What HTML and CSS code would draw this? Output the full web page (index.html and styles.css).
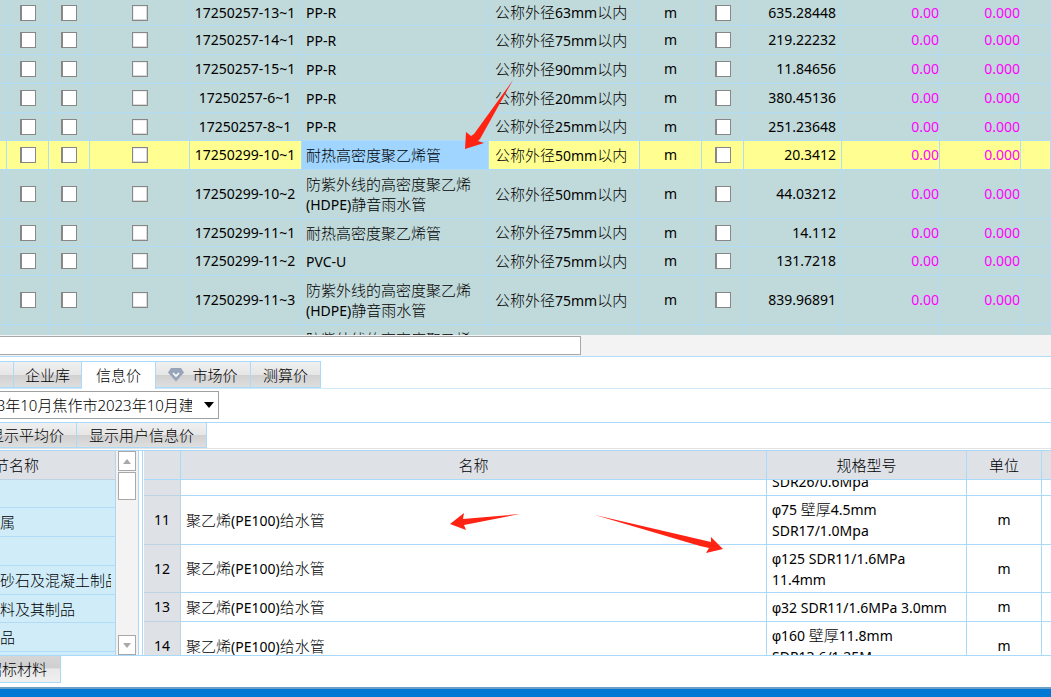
FILE: index.html
```html
<!DOCTYPE html>
<html lang="zh-CN">
<head>
<meta charset="utf-8">
<title>信息价</title>
<link rel="stylesheet" href="styles.css">
</head>
<body>
<main class="app">
  <section class="materials">
    <table class="grid">
      <colgroup><col class="w7"><col class="w42"><col class="w41"><col class="w100"><col class="w112"><col class="w187"><col class="w151"><col class="w62"><col class="w42"><col class="w98"><col class="w98"><col class="w81"><col></colgroup>
      <tbody>
        <tr class="cut"><td></td><td><input type="checkbox" aria-label="选择"></td><td><input type="checkbox" aria-label="锁定"></td><td><input type="checkbox" class="soft" aria-label="输出"></td><td class="code"><div>17250257-13~1</div></td><td class="name"><span class="lat">PP-R</span></td><td class="name size">公称外径<span class="lat">63mm</span>以内</td><td>m</td><td><input type="checkbox" aria-label="暂估"></td><td class="num">635.28448</td><td class="price">0.00</td><td class="price">0.000</td><td></td></tr>
        <tr><td></td><td><input type="checkbox" aria-label="选择"></td><td><input type="checkbox" aria-label="锁定"></td><td><input type="checkbox" class="soft" aria-label="输出"></td><td class="code"><div>17250257-14~1</div></td><td class="name"><span class="lat">PP-R</span></td><td class="name size">公称外径<span class="lat">75mm</span>以内</td><td>m</td><td><input type="checkbox" aria-label="暂估"></td><td class="num">219.22232</td><td class="price">0.00</td><td class="price">0.000</td><td></td></tr>
        <tr><td></td><td><input type="checkbox" aria-label="选择"></td><td><input type="checkbox" aria-label="锁定"></td><td><input type="checkbox" class="soft" aria-label="输出"></td><td class="code"><div>17250257-15~1</div></td><td class="name"><span class="lat">PP-R</span></td><td class="name size">公称外径<span class="lat">90mm</span>以内</td><td>m</td><td><input type="checkbox" aria-label="暂估"></td><td class="num">11.84656</td><td class="price">0.00</td><td class="price">0.000</td><td></td></tr>
        <tr><td></td><td><input type="checkbox" aria-label="选择"></td><td><input type="checkbox" aria-label="锁定"></td><td><input type="checkbox" class="soft" aria-label="输出"></td><td class="code"><div>17250257-6~1</div></td><td class="name"><span class="lat">PP-R</span></td><td class="name size">公称外径<span class="lat">20mm</span>以内</td><td>m</td><td><input type="checkbox" aria-label="暂估"></td><td class="num">380.45136</td><td class="price">0.00</td><td class="price">0.000</td><td></td></tr>
        <tr class="short"><td></td><td><input type="checkbox" aria-label="选择"></td><td><input type="checkbox" aria-label="锁定"></td><td><input type="checkbox" class="soft" aria-label="输出"></td><td class="code"><div>17250257-8~1</div></td><td class="name"><span class="lat">PP-R</span></td><td class="name size">公称外径<span class="lat">25mm</span>以内</td><td>m</td><td><input type="checkbox" aria-label="暂估"></td><td class="num">251.23648</td><td class="price">0.00</td><td class="price">0.000</td><td></td></tr>
        <tr class="current"><td></td><td><input type="checkbox" aria-label="选择"></td><td><input type="checkbox" aria-label="锁定"></td><td><input type="checkbox" class="soft" aria-label="输出"></td><td class="code"><div>17250299-10~1</div></td><td class="name picked">耐热高密度聚乙烯管</td><td class="name size">公称外径<span class="lat">50mm</span>以内</td><td>m</td><td><input type="checkbox" aria-label="暂估"></td><td class="num">20.3412</td><td class="price">0.00</td><td class="price">0.000</td><td></td></tr>
        <tr class="tall"><td></td><td><input type="checkbox" aria-label="选择"></td><td><input type="checkbox" aria-label="锁定"></td><td><input type="checkbox" class="soft" aria-label="输出"></td><td class="code"><div>17250299-10~2</div></td><td class="name">防紫外线的高密度聚乙烯<br><span class="lat">(HDPE)</span>静音雨水管</td><td class="name size">公称外径<span class="lat">50mm</span>以内</td><td>m</td><td><input type="checkbox" aria-label="暂估"></td><td class="num">44.03212</td><td class="price">0.00</td><td class="price">0.000</td><td></td></tr>
        <tr class="short"><td></td><td><input type="checkbox" aria-label="选择"></td><td><input type="checkbox" aria-label="锁定"></td><td><input type="checkbox" class="soft" aria-label="输出"></td><td class="code"><div>17250299-11~1</div></td><td class="name">耐热高密度聚乙烯管</td><td class="name size">公称外径<span class="lat">75mm</span>以内</td><td>m</td><td><input type="checkbox" aria-label="暂估"></td><td class="num">14.112</td><td class="price">0.00</td><td class="price">0.000</td><td></td></tr>
        <tr><td></td><td><input type="checkbox" aria-label="选择"></td><td><input type="checkbox" aria-label="锁定"></td><td><input type="checkbox" class="soft" aria-label="输出"></td><td class="code"><div>17250299-11~2</div></td><td class="name"><span class="lat">PVC-U</span></td><td class="name size">公称外径<span class="lat">75mm</span>以内</td><td>m</td><td><input type="checkbox" aria-label="暂估"></td><td class="num">131.7218</td><td class="price">0.00</td><td class="price">0.000</td><td></td></tr>
        <tr class="tall"><td></td><td><input type="checkbox" aria-label="选择"></td><td><input type="checkbox" aria-label="锁定"></td><td><input type="checkbox" class="soft" aria-label="输出"></td><td class="code"><div>17250299-11~3</div></td><td class="name">防紫外线的高密度聚乙烯<br><span class="lat">(HDPE)</span>静音雨水管</td><td class="name size">公称外径<span class="lat">75mm</span>以内</td><td>m</td><td><input type="checkbox" aria-label="暂估"></td><td class="num">839.96891</td><td class="price">0.00</td><td class="price">0.000</td><td></td></tr>
        <tr class="next"><td></td><td></td><td></td><td></td><td></td><td class="name">防紫外线的高密度聚乙烯</td><td></td><td></td><td></td><td></td><td></td><td></td><td></td></tr>
      </tbody>
    </table>
  </section>
  <div class="hscroll"><div class="hthumb"></div></div>

  <nav class="tabs">
    <button class="tab stub" aria-label="上一个"></button>
    <button class="tab library">企业库</button>
    <button class="tab active">信息价</button>
    <button class="tab market"><svg class="gem" viewBox="0 0 16 14" aria-hidden="true"><path d="M3 0H13L16 4.500L8 13.500L0 4.500Z" fill="#98a5b8"/><path d="M5 5L8 8L11 5" fill="none" stroke="#fff" stroke-width="1.600"/></svg>市场价</button>
    <button class="tab estimate">测算价</button>
  </nav>
  <div class="period">
    <div class="combo">
      <select aria-label="信息价期数"><option>2023年10月焦作市2023年10月建筑材料</option></select>
      <svg class="caret" viewBox="0 0 10 6" aria-hidden="true"><path d="M0 0H10L5 6Z" fill="#000"/></svg>
    </div>
  </div>
  <div class="tools">
    <button class="tool average">显示平均价</button>
    <button class="tool user">显示用户信息价</button>
  </div>

  <section class="browser">
    <div class="chapters">
      <table class="tree">
        <thead><tr><th><div class="heading">章节名称</div></th></tr></thead>
        <tbody>
          <tr class="short"><td></td></tr>
          <tr><td>属</td></tr>
          <tr><td></td></tr>
          <tr><td><div class="clip">砂石及混凝土制品</div></td></tr>
          <tr class="short"><td>料及其制品</td></tr>
          <tr><td>品</td></tr>
          <tr><td></td></tr>
        </tbody>
      </table>
      <div class="vscroll">
        <button class="arrow" aria-label="向上滚动"><svg viewBox="0 0 8 5" aria-hidden="true"><path d="M0 5H8L4 0Z" fill="#a8a8a8"/></svg></button>
        <div class="vthumb"></div>
        <button class="arrow last" aria-label="向下滚动"><svg viewBox="0 0 8 5" aria-hidden="true"><path d="M0 0H8L4 5Z" fill="#a8a8a8"/></svg></button>
      </div>
    </div>
    <div class="prices">
      <table class="list">
        <colgroup><col class="w37"><col><col class="w200"><col class="w75"><col class="w9"></colgroup>
        <thead><tr><th></th><th>名称</th><th>规格型号</th><th>单位</th><th></th></tr></thead>
        <tbody>
          <tr class="sliver"><td class="idx"></td><td></td><td class="spec"><div class="remainder"><span class="lat">SDR26/0.6Mpa</span></div></td><td></td><td></td></tr>
          <tr class="tall"><td class="idx">11</td><td class="name">聚乙烯<span class="lat">(PE100)</span>给水管</td><td class="spec"><span class="lat"><span class="phi">φ</span>75 </span>壁厚<span class="lat">4.5mm<br>SDR17/1.0Mpa</span></td><td class="unit">m</td><td></td></tr>
          <tr class="two"><td class="idx">12</td><td class="name">聚乙烯<span class="lat">(PE100)</span>给水管</td><td class="spec"><span class="lat"><span class="phi">φ</span>125 SDR11/1.6MPa<br>11.4mm</span></td><td class="unit">m</td><td></td></tr>
          <tr><td class="idx">13</td><td class="name">聚乙烯<span class="lat">(PE100)</span>给水管</td><td class="spec"><span class="lat"><span class="phi">φ</span>32 SDR11/1.6MPa 3.0mm</span></td><td class="unit">m</td><td></td></tr>
          <tr class="tall"><td class="idx">14</td><td class="name">聚乙烯<span class="lat">(PE100)</span>给水管</td><td class="spec"><span class="lat"><span class="phi">φ</span>160 </span>壁厚<span class="lat">11.8mm<br>SDR13.6/1.25M</span></td><td class="unit">m</td><td></td></tr>
        </tbody>
      </table>
    </div>
  </section>
  <footer class="bottom"><button class="tool bid">招标材料</button></footer>
  <div class="taskbar"></div>

  <svg class="marks" width="1051" height="697" viewBox="0 0 1051 697" aria-hidden="true">
    <g fill="#ff2314">
      <path d="M513 80L480 139L478 141L484 143L465 149L466 132L471 136L474 134Z"/>
      <path d="M520 514L463 519L464 513L450 524L466 530L464 525Z"/>
      <path d="M595 515L711 542L711 537L723 549L706 553L709 548L700 546Z"/>
    </g>
  </svg>
</main>
</body>
</html>
```

FILE: styles.css
```css
* { box-sizing: border-box; }

body {
  margin: 0;
  background: #fff;
  color: #000;
  font: 300 15px/20px "Noto Sans", "Noto Sans CJK SC", sans-serif;
  overflow: hidden;
}

button, select { font: inherit; color: inherit; }

.app {
  position: relative;
  display: flex;
  flex-direction: column;
  height: 100vh;
}

.lat { font-size: 14px; font-weight: 400; }
.phi { font-family: "Liberation Sans", sans-serif; }

table {
  width: 100%;
  border-collapse: separate;
  border-spacing: 0;
  table-layout: fixed;
}

td, th { padding: 0; font-weight: inherit; white-space: nowrap; }

.w7 { width: 7px; }
.w9 { width: 9px; }
.w37 { width: 37px; }
.w41 { width: 41px; }
.w42 { width: 42px; }
.w62 { width: 62px; }
.w75 { width: 75px; }
.w81 { width: 81px; }
.w98 { width: 98px; }
.w100 { width: 100px; }
.w112 { width: 112px; }
.w151 { width: 151px; }
.w187 { width: 187px; }
.w200 { width: 200px; }

/* Material summary */
.materials {
  flex: none;
  height: 335px;
  overflow: hidden;
  background: #c0d9da;
}

.grid td {
  height: 29px;
  border-right: 1px solid #b1dcf8;
  border-bottom: 1px solid #b1dcf8;
  text-align: center;
  font-size: 14px;
  font-weight: 400;
}

.grid .cut td { height: 26px; }
.grid .short td { height: 28px; }
.grid .tall td { height: 49px; }
.grid .next td { height: 49px; padding-top: 4px; vertical-align: top; }
.grid .current td { background: #ffff91; }
.grid td.name { text-align: left; padding-left: 4px; font-size: 15px; font-weight: 300; }
.grid td.size { padding-left: 6px; }
.grid .current .picked { background: #9fd5ff; }
.grid .num { text-align: right; padding-right: 5px; }
.grid .price { text-align: right; color: #f0f; }
.code div { margin: 0 5px 0 4px; overflow: hidden; }

input[type="checkbox"] {
  appearance: none;
  display: block;
  width: 16px;
  height: 16px;
  margin: 0 auto;
  background: #fff;
  border: 1px solid #878787;
  border-left-width: 2px;
}

input.soft[type="checkbox"] {
  border-left-width: 1px;
  box-shadow: inset -1px -1px #d8d8d8, inset 1px 1px #eee;
}

.hscroll {
  flex: none;
  height: 22px;
  padding-top: 1px;
  background: #f3f3f3;
  border-bottom: 1px solid #b1dcf8;
}

.hthumb {
  width: 581px;
  height: 19px;
  background: #fff;
  border: 1px solid #a8a8a8;
  border-left: 0;
}

/* Price source tabs */
.tabs {
  flex: none;
  display: flex;
  align-items: flex-end;
  height: 32px;
  border-bottom: 1px solid #cfe8fa;
}

.tab, .tool {
  display: flex;
  align-items: center;
  justify-content: center;
  flex: none;
  height: 27px;
  padding: 0;
  white-space: nowrap;
  border: 1px solid #a9dafa;
  border-left: 0;
  background: linear-gradient(#f0f0f0 0, #e6e6e6 50%, #d0d0d0 51%, #dedede 100%);
}

.tab.stub { width: 14px; }
.tab.library { width: 68px; }
.tab.active { width: 74px; height: 28px; margin-bottom: -1px; padding-bottom: 2px; background: #fff; border-bottom: 0; }
.tab.market { width: 95px; gap: 8px; }
.tab.estimate { width: 70px; }
.gem { width: 16px; height: 14px; }

.period {
  flex: none;
  height: 34px;
  padding-top: 2px;
  border-bottom: 1px solid #a9dafa;
}

.combo {
  position: relative;
  display: flex;
  justify-content: flex-end;
  width: 219px;
  height: 28px;
  overflow: hidden;
}

.combo select {
  appearance: none;
  flex: none;
  width: 250px;
  height: 28px;
  padding: 0 26px 0 1px;
  border: 1px solid #a0a0a0;
  border-radius: 0;
  background: #fff;
}

.caret {
  position: absolute;
  right: 5px;
  top: 11px;
  width: 10px;
  height: 6px;
  pointer-events: none;
}

.tools { flex: none; display: flex; height: 26px; border-bottom: 1px solid #e4e4e4; }
.tool { height: 25px; border-top: 0; }
.tool.average { width: 77px; padding-right: 12px; justify-content: flex-end; }
.tool.user { width: 130px; }

/* Chapter tree and price list */
.browser {
  flex: 1;
  display: flex;
  gap: 3px;
  min-height: 0;
  margin-top: 1px;
  border-top: 1px solid #a9dafa;
  border-bottom: 1px solid #a9dafa;
}

.chapters {
  flex: none;
  display: flex;
  width: 139px;
  overflow: hidden;
  border-right: 1px solid #a9dafa;
}

.tree { flex: none; width: 116px; align-self: flex-start; }

.tree th, .tree td {
  height: 29px;
  text-align: left;
  border-right: 1px solid #b1d4ef;
  border-bottom: 1px solid #b1dcf8;
}

.tree .short td { height: 28px; }
.tree td { background: #cfecf8; }
.tree th, .list th { background: #dee1e6; border-color: #bdd3e4; }

.heading {
  display: flex;
  justify-content: flex-end;
  width: 39px;
}

.clip { width: 111px; overflow: hidden; }

.vscroll {
  flex: 1;
  display: flex;
  flex-direction: column;
  align-items: center;
  background: #f3f3f3;
}

.arrow {
  display: grid;
  place-items: center;
  width: 18px;
  height: 20px;
  padding: 0;
  background: #fff;
  border: 1px solid #a8a8a8;
}

.arrow svg { width: 8px; height: 5px; }
.arrow.last { margin-top: auto; }

.vthumb {
  width: 18px;
  height: 28px;
  margin-top: 1px;
  background: #fff;
  border: 1px solid #a8a8a8;
}

.prices {
  flex: 1;
  min-width: 0;
  padding-left: 1px;
  overflow: hidden;
  border-left: 1px solid #a9dafa;
}

.list th, .list td {
  height: 29px;
  border-right: 1px solid #a9dafa;
  border-bottom: 1px solid #a9dafa;
}

.list td { padding-left: 5px; }
.list .sliver td { height: 16px; }
.list .tall td { height: 49px; }
.list .two td { height: 48px; }
.list tr > :last-child { border-right: 0; }

.list td.idx {
  padding: 0;
  text-align: center;
  font-size: 14px;
  font-weight: 400;
  background: #dee1e6;
  border-color: #bdd3e4;
}

.list td.unit { padding: 0; text-align: center; font-size: 14px; font-weight: 400; }

.remainder {
  display: flex;
  align-items: flex-end;
  height: 15px;
  padding-bottom: 3px;
  overflow: hidden;
}

.bottom { flex: none; height: 31px; }
.tool.bid {
  width: 61px;
  height: 27px;
  padding-right: 13px;
  justify-content: flex-end;
  background: linear-gradient(#d6d6d6, #cfcfcf 45%, #e8e8e8 50%, #f0f0f0);
}

.taskbar {
  flex: none;
  height: 10px;
  background: #0078d4;
  border-top: 2px solid #6a9fc8;
}

.marks {
  position: absolute;
  left: 0;
  top: 0;
  pointer-events: none;
}
```
